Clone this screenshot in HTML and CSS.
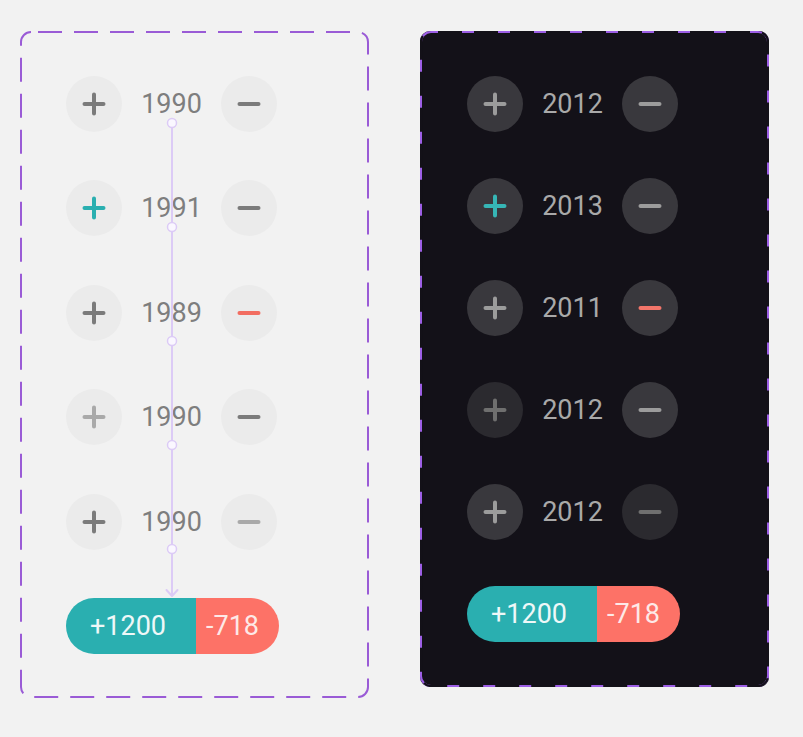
FILE: index.html
```html
<!DOCTYPE html>
<html>
<head>
<meta charset="utf-8">
<link rel="stylesheet" href="styles.css">
</head>
<body>
<div class="stage">
  <section class="card card-light">
    <svg class="frame" width="349" height="667" viewBox="0 0 349 667">
      <rect x="1" y="1" width="347" height="665" rx="10" ry="10" fill="none" stroke="#9a5bd6" stroke-width="2" stroke-dasharray="24 12" stroke-dashoffset="-7"/>
    </svg>
    <svg class="flow" width="349" height="667" viewBox="0 0 349 667">
      <line x1="152" y1="92" x2="152" y2="565" stroke="#dccbf6" stroke-width="2"/>
      <polyline points="146.5,559 152,565 157.5,559" fill="none" stroke="#dccbf6" stroke-width="2" stroke-linecap="round" stroke-linejoin="round"/>
      <circle cx="152" cy="92" r="4.5" fill="#faf7ff" stroke="#dccbf6" stroke-width="1.5"/>
      <circle cx="152" cy="196" r="4.5" fill="#faf7ff" stroke="#dccbf6" stroke-width="1.5"/>
      <circle cx="152" cy="310" r="4.5" fill="#faf7ff" stroke="#dccbf6" stroke-width="1.5"/>
      <circle cx="152" cy="414" r="4.5" fill="#faf7ff" stroke="#dccbf6" stroke-width="1.5"/>
      <circle cx="152" cy="518" r="4.5" fill="#faf7ff" stroke="#dccbf6" stroke-width="1.5"/>
    </svg>

    <div class="row">
      <span class="btn"><svg class="ico" viewBox="0 0 24 24"><path d="M2.5 12H21.5M12 2.5V21.5"/></svg></span>
      <span class="year">1990</span>
      <span class="btn"><svg class="ico" viewBox="0 0 24 24"><path d="M2.5 12H21.5"/></svg></span>
    </div>
    <div class="row">
      <span class="btn accent-plus"><svg class="ico" viewBox="0 0 24 24"><path d="M2.5 12H21.5M12 2.5V21.5"/></svg></span>
      <span class="year">1991</span>
      <span class="btn"><svg class="ico" viewBox="0 0 24 24"><path d="M2.5 12H21.5"/></svg></span>
    </div>
    <div class="row">
      <span class="btn"><svg class="ico" viewBox="0 0 24 24"><path d="M2.5 12H21.5M12 2.5V21.5"/></svg></span>
      <span class="year">1989</span>
      <span class="btn accent-minus"><svg class="ico" viewBox="0 0 24 24"><path d="M2.5 12H21.5"/></svg></span>
    </div>
    <div class="row">
      <span class="btn dim"><svg class="ico" viewBox="0 0 24 24"><path d="M2.5 12H21.5M12 2.5V21.5"/></svg></span>
      <span class="year">1990</span>
      <span class="btn"><svg class="ico" viewBox="0 0 24 24"><path d="M2.5 12H21.5"/></svg></span>
    </div>
    <div class="row">
      <span class="btn"><svg class="ico" viewBox="0 0 24 24"><path d="M2.5 12H21.5M12 2.5V21.5"/></svg></span>
      <span class="year">1990</span>
      <span class="btn dim"><svg class="ico" viewBox="0 0 24 24"><path d="M2.5 12H21.5"/></svg></span>
    </div>
    <div class="total">
      <span class="plus-part">+1200</span><span class="minus-part">-718</span>
    </div>
  </section>

  <section class="card card-dark">
    <svg class="frame" width="349" height="656" viewBox="0 0 349 656">
      <rect x="1" y="1" width="347" height="654" rx="10" ry="10" fill="none" stroke="#9d5fe6" stroke-width="2"/>
      <rect x="1" y="1" width="347" height="654" rx="10" ry="10" fill="none" stroke="#131118" stroke-width="2.2" stroke-dasharray="24 12" stroke-dashoffset="-7"/>
    </svg>

    <div class="row">
      <span class="btn"><svg class="ico" viewBox="0 0 24 24"><path d="M2.5 12H21.5M12 2.5V21.5"/></svg></span>
      <span class="year">2012</span>
      <span class="btn"><svg class="ico" viewBox="0 0 24 24"><path d="M2.5 12H21.5"/></svg></span>
    </div>
    <div class="row">
      <span class="btn accent-plus"><svg class="ico" viewBox="0 0 24 24"><path d="M2.5 12H21.5M12 2.5V21.5"/></svg></span>
      <span class="year">2013</span>
      <span class="btn"><svg class="ico" viewBox="0 0 24 24"><path d="M2.5 12H21.5"/></svg></span>
    </div>
    <div class="row">
      <span class="btn"><svg class="ico" viewBox="0 0 24 24"><path d="M2.5 12H21.5M12 2.5V21.5"/></svg></span>
      <span class="year">2011</span>
      <span class="btn accent-minus"><svg class="ico" viewBox="0 0 24 24"><path d="M2.5 12H21.5"/></svg></span>
    </div>
    <div class="row">
      <span class="btn dim"><svg class="ico" viewBox="0 0 24 24"><path d="M2.5 12H21.5M12 2.5V21.5"/></svg></span>
      <span class="year">2012</span>
      <span class="btn"><svg class="ico" viewBox="0 0 24 24"><path d="M2.5 12H21.5"/></svg></span>
    </div>
    <div class="row">
      <span class="btn"><svg class="ico" viewBox="0 0 24 24"><path d="M2.5 12H21.5M12 2.5V21.5"/></svg></span>
      <span class="year">2012</span>
      <span class="btn dim"><svg class="ico" viewBox="0 0 24 24"><path d="M2.5 12H21.5"/></svg></span>
    </div>
    <div class="total">
      <span class="plus-part">+1200</span><span class="minus-part">-718</span>
    </div>
  </section>
</div>
</body>
</html>
```

FILE: styles.css
```css
html, body {
  margin: 0;
  padding: 0;
  background: #f2f2f2;
  font-family: Roboto, "Liberation Sans", sans-serif;
}

.stage {
  display: flex;
  align-items: flex-start;
  gap: 51px;
  padding: 31px 0 0 20px;
}

.card {
  position: relative;
  box-sizing: border-box;
  width: 349px;
  display: flex;
  flex-direction: column;
  padding-left: 46px;
  border-radius: 10px;
}

.card-light {
  height: 667px;
  padding-top: 45px;
  gap: 48.4px;
}

.card-dark {
  height: 656px;
  padding-top: 45px;
  padding-left: 47px;
  gap: 46px;
  background: #131118;
}

.frame, .flow {
  position: absolute;
  left: 0;
  top: 0;
  pointer-events: none;
}

.flow {
  z-index: 2;
}

.row {
  display: grid;
  grid-template-columns: 56px 1fr 56px;
  align-items: center;
  width: 211px;
  height: 56px;
}

.btn {
  width: 56px;
  height: 56px;
  border-radius: 50%;
  display: flex;
  align-items: center;
  justify-content: center;
}

.ico {
  width: 24px;
  height: 24px;
  fill: none;
  stroke: currentColor;
  stroke-width: 4;
  stroke-linecap: round;
}

.year {
  text-align: center;
  font-size: 27px;
  line-height: 56px;
  letter-spacing: 0;
}

.card-light .btn { background: #ebebeb; color: #7b7b7b; }
.card-light .btn.dim { color: #a9a9a9; }
.card-light .btn.accent-plus { color: #2aafb0; }
.card-light .btn.accent-minus { color: #f26d61; }
.card-light .year { color: #7e7e7e; }

.card-dark .btn { background: #39383d; color: #9c9c9c; }
.card-dark .btn.dim { background: #2b2a2f; color: #6f6f6f; }
.card-dark .btn.accent-plus { color: #36b6b6; }
.card-dark .btn.accent-minus { color: #f2756a; }
.card-dark .year { color: #a9a9a9; }

.total {
  display: flex;
  width: 213px;
  height: 56px;
  border-radius: 28px;
  overflow: hidden;
  font-size: 27px;
  line-height: 56px;
  color: #eef8f8;
}

.card-dark .total { width: 213px; }

.plus-part {
  background: #2aafb0;
  width: 130px;
  box-sizing: border-box;
  padding-left: 24px;
}

.minus-part {
  background: #fd7267;
  flex: 1;
  box-sizing: border-box;
  padding-left: 10px;
  color: #fde9e7;
}
```
